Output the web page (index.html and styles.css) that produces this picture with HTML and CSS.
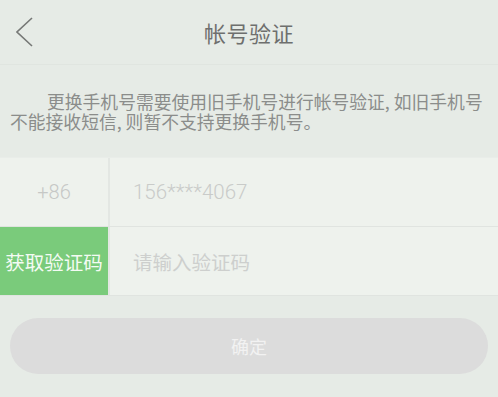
FILE: index.html
```html
<!DOCTYPE html>
<html lang="zh-CN">
<head>
<meta charset="utf-8">
<title>帐号验证</title>
<link rel="stylesheet" href="styles.css">
</head>
<body>
<div class="page">
  <header class="topbar">
    <div class="back">
      <svg width="18" height="30" viewBox="0 0 18 30" aria-hidden="true">
        <polyline points="16,1 1,15 16,29" fill="none" stroke="#767876" stroke-width="1.6" stroke-linejoin="miter"/>
      </svg>
    </div>
    <h1 class="title">帐号验证</h1>
    <div class="spacer"></div>
  </header>
  <p class="desc">更换手机号需要使用旧手机号进行帐号验证, 如旧手机号不能接收短信, 则暂不支持更换手机号。</p>
  <div class="form">
    <div class="row">
      <div class="cell-left">+86</div>
      <div class="cell-right num">156****4067</div>
    </div>
    <div class="row">
      <div class="cell-left get-code">获取验证码</div>
      <div class="cell-right placeholder">请输入验证码</div>
    </div>
  </div>
  <div class="actions">
    <button class="confirm" type="button">确定</button>
  </div>
</div>
</body>
</html>
```
FILE: styles.css
```css
html, body {
  margin: 0;
  padding: 0;
}
body {
  background: #e6ebe6;
  font-family: "Noto Sans CJK SC", "Noto Sans", sans-serif;
  width: 498px;
  height: 397px;
  overflow: hidden;
}
.page {
  display: flex;
  flex-direction: column;
}
.topbar {
  height: 64px;
  display: grid;
  grid-template-columns: 1fr auto 1fr;
  align-items: center;
  border-bottom: 1px solid #e0e5e0;
}
.back {
  padding-left: 16px;
  display: flex;
  align-items: center;
  height: 30px;
  margin-top: -1px;
}
.back svg {
  display: block;
}
.title {
  margin: 0;
  font-size: 22px;
  font-weight: 400;
  color: #6e6f6e;
  line-height: 26px;
  letter-spacing: 0.5px;
}
.desc {
  margin: 0;
  padding: 26px 5px 26px 10px;
  font-size: 17.8px;
  line-height: 20px;
  color: #8b8d8b;
  text-indent: 37px;
}
.form {
  display: flex;
  flex-direction: column;
  border-top: 1px solid #e9ede9;
}
.row {
  display: flex;
  height: 68px;
  background: #eef2ed;
  border-bottom: 1px solid #e0e4e0;
}
.cell-left {
  width: 108px;
  flex: none;
  display: flex;
  align-items: center;
  justify-content: center;
  border-right: 2px solid #e3e7e3;
  color: #c6c8c6;
  font-family: Roboto, "Liberation Sans", sans-serif;
  font-weight: 300;
  font-size: 20px;
}
.get-code {
  background: #7acb7b;
  color: #f4fbf4;
  font-family: "Noto Sans CJK SC", sans-serif;
  font-weight: 400;
  font-size: 19.5px;
  letter-spacing: 0;
  white-space: nowrap;
}
.cell-right {
  flex: 1;
  display: flex;
  align-items: center;
  padding-left: 23px;
  color: #c9cbc9;
}
.num {
  font-family: Roboto, "Liberation Sans", sans-serif;
  font-weight: 300;
  font-size: 20.5px;
}
.placeholder {
  font-size: 19.5px;
  color: #cdcfcd;
}
.actions {
  padding: 22px 10px 0 10px;
}
.confirm {
  display: block;
  width: 100%;
  height: 56px;
  border: none;
  border-radius: 28px;
  background: #dcdcdc;
  color: #f2f2f2;
  font-family: "Noto Sans CJK SC", sans-serif;
  font-size: 18px;
  padding: 0;
}
```
